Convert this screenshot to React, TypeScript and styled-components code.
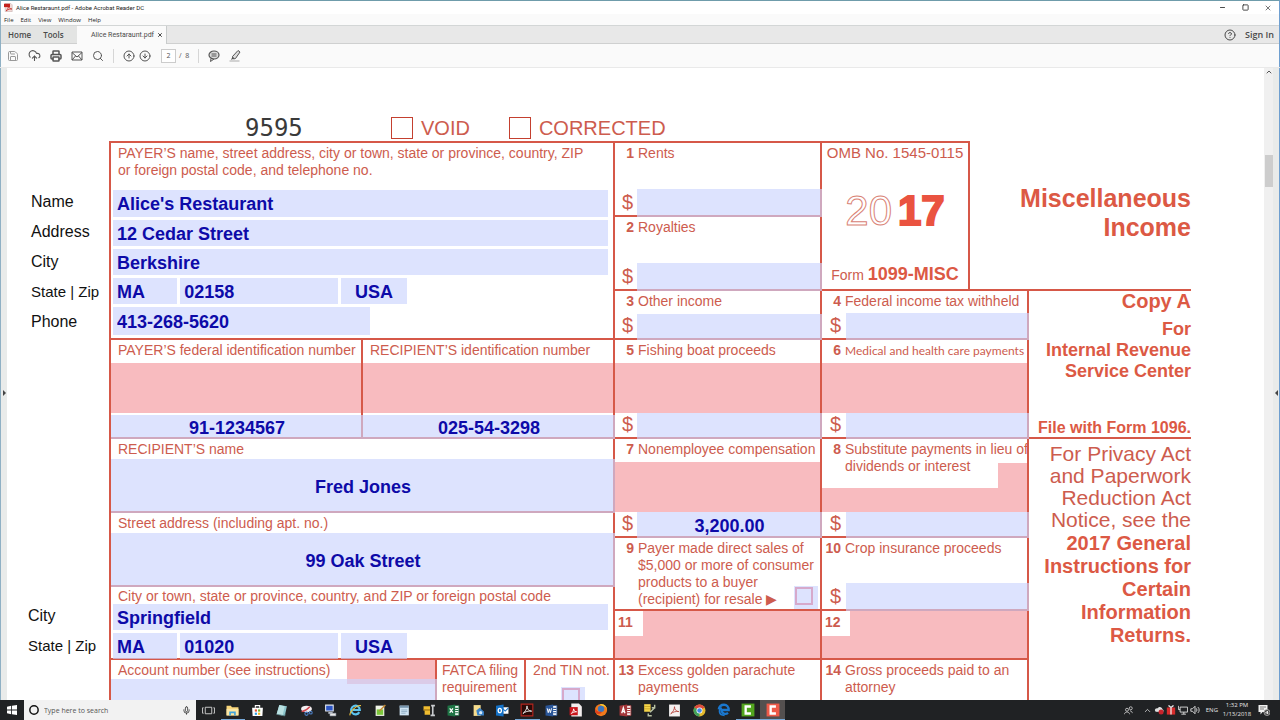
import React from 'react';
import styled, { createGlobalStyle } from 'styled-components';
import {
  Save, CloudUpload, Printer, Search, CircleArrowUp, CircleArrowDown,
  Minus, Square, X, ChevronUp, Mic, CircleHelp,
} from 'lucide-react';

const line = '#d65848';
const ink = '#cd5c4e';
const strong = '#dc5944';
const pink = '#f8bbbf';
const fieldBlue = 'rgba(203, 212, 254, 0.65)';

const GlobalStyle = createGlobalStyle`
  * { box-sizing: border-box; }
  body { margin: 0; font-family: "Liberation Sans", Arial, sans-serif; }
  button, input { font: inherit; margin: 0; padding: 0; border: 0; color: inherit; }
  button { background: none; }
  a { color: inherit; text-decoration: none; }
`;

/* ---------- window chrome ---------- */
const Window = styled.div`
  display: flex;
  flex-direction: column;
  height: 100vh;
  background: #fff;
  color: #222;
`;

const Chrome = styled.header`
  flex: none;
  border-top: 1px solid #6f9cab;
  border-left: 1px solid #8fb0c4;
  border-right: 1px solid #6f9fd0;
  font-family: "Open Sans", "Noto Sans", sans-serif;
`;

const TitleBar = styled.div`
  display: flex;
  align-items: center;
  height: 13px;
  padding: 0 1px 0 3px;
  gap: 3px;
  font-size: 6px;
  line-height: 8px;
`;

const WindowTitle = styled.span`
  flex: 1;
  font-family: Roboto, sans-serif;
`;

const WindowButton = styled.button`
  display: flex;
  justify-content: center;
  width: 20px;
  color: #333;
`;

const MenuBar = styled.nav`
  display: flex;
  align-items: center;
  gap: 7px;
  height: 11px;
  padding-left: 3px;
  background: #fafafa;
  font-size: 6px;
  line-height: 8px;
`;

const TabBar = styled.div`
  display: flex;
  height: 19px;
  background: #e8e8e8;
  border-top: 1px solid #d3d6d6;
  border-bottom: 1px solid #cfd0d0;
  font-size: 8px;
  font-weight: 600;
  color: #4a4a4a;
`;

const HomeTabs = styled.div`
  display: flex;
  align-items: center;
  gap: 12px;
  width: 76px;
  padding-left: 7px;
  background: #e3e4e3;
`;

const ActiveTab = styled.div`
  display: flex;
  align-items: center;
  gap: 3px;
  width: 90px;
  height: 18px;
  padding-left: 14px;
  background: #fafafa;
  border-right: 1px solid #c9cccc;
  font-family: Roboto, sans-serif;
  font-size: 7px;
  font-weight: 400;
`;

const Account = styled.div`
  display: flex;
  align-items: center;
  gap: 9px;
  margin-left: auto;
  padding-right: 5px;
  font-size: 9px;
`;

const IconButton = styled.button`
  display: flex;
  color: inherit;
`;

const Toolbar = styled.div`
  display: flex;
  align-items: center;
  height: 23px;
  padding-left: 6px;
  background: #fafafa;
  color: #555;
`;

const ToolGroup = styled.div<{ $gap: number }>`
  display: flex;
  align-items: center;
  gap: ${(p) => p.$gap}px;
`;

const Divider = styled.span`
  width: 1px;
  height: 14px;
  margin: 0 9px;
  background: #d6d6d6;
`;

const PageNumber = styled.input`
  width: 15px;
  height: 14px;
  margin-left: 10px;
  border: 1px solid #ccc;
  background: #fff;
  font-size: 7px;
  text-align: center;
`;

const PageTotal = styled.span`
  margin-left: 3px;
  font-size: 7px;
`;

/* ---------- document area ---------- */
const Viewer = styled.div`
  display: flex;
  flex: 1;
  min-height: 0;
  border-top: 1px solid #e9e9e9;
`;

const Rail = styled.button<{ $side: 'left' | 'right' }>`
  display: flex;
  flex: none;
  align-items: center;
  justify-content: center;
  width: 7px;
  padding-top: 18px;
  background: #e9ebea;
  border-${(p) => p.$side}: 1px solid ${(p) => (p.$side === 'left' ? '#8fb0c4' : '#6f9fd0')};
`;

const Scrollbar = styled.div`
  display: flex;
  flex: none;
  flex-direction: column;
  align-items: center;
  width: 9px;
  background: #f0f0f0;
  color: #555;
`;

const ScrollThumb = styled.span`
  width: 8px;
  height: 32px;
  margin-top: 79px;
  background: #cdcdcd;
`;

const Page = styled.main`
  flex: 1;
  min-width: 0;
  overflow: hidden;
  padding-right: 73px;
  color: ${ink};
  font-size: 14px;
  line-height: 17px;
`;

const PageHead = styled.div`
  display: flex;
  align-items: center;
  height: 73px;
  padding: 47px 0 0 238px;
  font-size: 20px;
`;

const ScanCode = styled.span`
  width: 146px;
  color: #3a3a3a;
  font-family: "DejaVu Sans Mono", monospace;
  font-size: 24px;
`;

const HeadOption = styled.label`
  display: flex;
  align-items: center;
  gap: 8px;
  margin-right: 39px;
`;

const OpenBox = styled.input.attrs({ type: 'checkbox' })`
  appearance: none;
  width: 22px;
  height: 22px;
  border: 1px solid #c4402f;
`;

const Body = styled.div`
  display: flex;
`;

const SideLabels = styled.div`
  flex: none;
  display: flex;
  flex-direction: column;
  width: 102px;
  padding: 46px 0 0 21px;
  color: #111;
`;

const SideLabel = styled.label<{ $small?: boolean; $outdent?: boolean }>`
  padding-left: ${(p) => (p.$outdent ? 0 : 3)}px;
  font-size: ${(p) => (p.$small ? 15 : 16)}px;
  line-height: 30px;
  white-space: nowrap;
`;

const SideGap = styled.div`
  height: 264px;
`;

const FormSheet = styled.form`
  display: grid;
  grid-template-columns: minmax(0, 504fr) minmax(0, 207fr) minmax(0, 371fr);
  flex: 1;
  min-width: 0;
`;

const Column = styled.div`
  display: flex;
  flex-direction: column;
  min-width: 0;
`;

const Box = styled.section<{ $h: number }>`
  display: flex;
  flex-direction: column;
  min-width: 0;
  height: ${(p) => p.$h}px;
  border-top: 2px solid ${line};
  border-left: 2px solid ${line};
`;

const Caption = styled.label<{ $tight?: boolean }>`
  display: block;
  padding: 2px 0 0 7px;
  line-height: ${(p) => (p.$tight ? 15 : 17)}px;
  white-space: nowrap;
`;

const BoxCaption = styled(Caption)`
  padding-left: 5px;
`;

const Field = styled.input<{ $h: number; $center?: boolean; $flush?: boolean }>`
  position: relative;
  flex: none;
  min-width: 0;
  width: ${(p) => (p.$flush ? 'calc(100% + 2px)' : '100%')};
  height: ${(p) => p.$h}px;
  padding: ${(p) => (p.$center ? '2px 0 0' : '2px 0 0 4px')};
  background: ${fieldBlue};
  color: #0d0aa8;
  font-size: 18px;
  font-weight: 700;
  text-align: ${(p) => (p.$center ? 'center' : 'left')};
  outline: none;
`;

const BottomField = styled(Field)`
  margin-top: auto;
  margin-bottom: -2px;
`;

const FieldStack = styled.div<{ $top: number }>`
  display: flex;
  flex-direction: column;
  gap: 3px;
  padding: ${(p) => p.$top}px 5px 0 2px;
`;

const PlaceRow = styled.div`
  display: grid;
  grid-template-columns: 64fr 158fr 65fr 198fr;
  gap: 3px;
`;

const Half = styled.div`
  width: 52%;
`;

const SplitRow = styled.div<{ $cols: string }>`
  display: grid;
  grid-template-columns: ${(p) => p.$cols};
`;

const Shade = styled.div<{ $h: number; $top?: number }>`
  height: ${(p) => p.$h}px;
  margin-top: ${(p) => p.$top || 0}px;
  background: ${pink};
`;

const NumberedCaption = styled.label`
  display: grid;
  grid-template-columns: 19px minmax(0, 1fr);
  column-gap: 4px;
  padding-top: 2px;
  white-space: nowrap;
`;

const BoxNumber = styled.b`
  text-align: right;
`;

const Narrow = styled.span`
  display: block;
  font-family: Lato, "Arial Narrow", sans-serif;
  font-size: 12px;
`;

const MoneyRow = styled.div`
  display: flex;
  align-items: flex-end;
  margin-top: auto;
  margin-right: -2px;
  margin-bottom: -2px;
`;

const Dollar = styled.span<{ $wide?: boolean }>`
  width: ${(p) => (p.$wide ? 24 : 22)}px;
  flex: none;
  padding: 0 0 5px ${(p) => (p.$wide ? 8 : 7)}px;
  font-size: 20px;
  line-height: 20px;
`;

const MoneyField = styled(Field)`
  flex: 1 1 0;
  width: auto;
`;

const TickArea = styled.span`
  position: relative;
  display: flex;
  width: 24px;
  height: 23px;
  padding: 1px;
  background: ${fieldBlue};
`;

const Tick = styled.input.attrs({ type: 'checkbox' })`
  appearance: none;
  width: 18px;
  height: 18px;
  border: 2px solid #d6a9cb;
`;

const TickRow = styled.div<{ $pad: number; $pull: number }>`
  display: flex;
  justify-content: flex-end;
  padding-right: ${(p) => p.$pad}px;
  margin-top: ${(p) => p.$pull}px;
`;

const ShadedBox = styled(Box)`
  background: ${pink};
`;

const NumberTag = styled.b`
  width: 28px;
  height: 25px;
  padding: 3px 0 0 3px;
  background: #fff;
`;

const SubstituteLabel = styled(NumberedCaption)`
  height: 49px;
  background: linear-gradient(#fff, #fff) left top / calc(100% - 29px) 100% no-repeat,
    linear-gradient(#fff, #fff) right top / 29px 24px no-repeat, ${pink};
`;

const AccountHead = styled.div`
  display: flex;
  justify-content: space-between;
  height: 19px;
`;

const AccountShade = styled.div`
  flex: none;
  width: 88px;
  height: 24px;
  background: ${pink};
`;

const TopRight = styled.div`
  display: grid;
  grid-template-columns: minmax(0, 150fr) minmax(0, 221fr);
  height: 148px;
`;

const YearBox = styled(Box)`
  align-items: center;
  border-right: 2px solid ${line};
`;

const Omb = styled.div`
  padding-top: 1px;
  font-size: 15px;
  white-space: nowrap;
`;

const Year = styled.div`
  margin-top: 27px;
  color: #ea5340;
  font-size: 42px;
  line-height: 46px;
`;

const YearOutline = styled.span`
  color: transparent;
  -webkit-text-stroke: 1px #d98275;
`;

const YearSolid = styled.b`
  margin-left: 6px;
  -webkit-text-stroke: 2px #ea5340;
`;

const FormName = styled.div`
  margin-top: auto;
  padding-bottom: 5px;
  b { font-size: 18px; color: ${strong}; }
`;

const FormTitle = styled.h1`
  margin: 0;
  padding-top: 43px;
  color: ${strong};
  font-size: 25px;
  line-height: 29px;
  text-align: right;
`;

const LowerRight = styled.div`
  display: grid;
  grid-template-columns: minmax(0, 207fr) minmax(0, 164fr);
`;

const CopyBox = styled(Box)`
  color: ${strong};
  font-size: 18px;
  font-weight: 700;
  line-height: 21px;
  text-align: right;
`;

const CopyTitle = styled.h2`
  margin: 0;
  font-size: 20px;
  line-height: 21px;
  padding-bottom: 7px;
`;

const FileWith = styled.span`
  margin-top: auto;
  font-size: 16px;
  line-height: 18px;
  white-space: nowrap;
`;

const Notice = styled(Box)`
  padding-top: 4px;
  font-size: 21px;
  line-height: 22px;
  text-align: right;
  b { color: ${strong}; font-size: 20px; line-height: 23px; padding-top: 1px; }
`;

/* ---------- task bar ---------- */
const Taskbar = styled.footer`
  display: flex;
  flex: none;
  align-items: center;
  height: 20px;
  background: #202224;
  color: #e6e6e6;
  font-family: "Open Sans", "Noto Sans", sans-serif;
`;

const StartButton = styled.button`
  display: flex;
  justify-content: center;
  width: 24px;
`;

const SearchBox = styled.label`
  display: flex;
  align-items: center;
  gap: 5px;
  width: 172px;
  height: 20px;
  padding: 0 5px;
  background: #f2f2f2;
  color: #222;
`;

const SearchInput = styled.input`
  flex: 1;
  min-width: 0;
  background: none;
  font-size: 7px;
  outline: none;
  &::placeholder { color: #555; opacity: 1; }
`;

const AppStrip = styled.div`
  display: grid;
  grid-template-columns: repeat(24, 1fr);
  flex: 0 1 589px;
  height: 20px;
`;

const AppButton = styled.button<{ $open?: boolean; $active?: boolean }>`
  display: flex;
  align-items: center;
  justify-content: center;
  height: 20px;
  padding-top: 1px;
  background: ${(p) => (p.$active ? '#54504f' : 'transparent')};
  border-bottom: 1px solid ${(p) => (p.$open ? '#76a9d8' : 'transparent')};
`;

const Tray = styled.div`
  display: flex;
  align-items: center;
  gap: 2px;
  margin-left: auto;
  padding-right: 10px;
  font-size: 6px;
`;

const Person = styled.span`
  display: flex;
  margin-right: 8px;
`;

const Clock = styled.time`
  margin: 0 4px 0 2px;
  width: 30px;
  line-height: 9px;
  text-align: center;
`;

const Lang = styled.span`
  margin-left: 4px;
`;

/* ---------- icon drawings ---------- */
const Glyph = ({ children, size = 13 }: { children: React.ReactNode; size?: number }) => (
  <svg width={size} height={size} viewBox="0 0 24 24" fill="none" aria-hidden="true">{children}</svg>
);

const PdfBadge = () => (
  <Glyph size={9}>
    <path d="M3 1h15l4 4v18H3z" fill="#f3d9d6" stroke="#a99" />
    <path d="M0 2h16v9H0z" fill="#c4211b" />
    <path d="M6 21c3-4 6-9 6-13 0 4 4 8 9 8-5-1-10 1-15 5z" stroke="#c4211b" strokeWidth="2" />
  </Glyph>
);

const acrobatSwirl = 'M5 18c4-3 7-8 7-13 0 5 3 9 8 9-6-1-11 1-15 4z';

const Letter = ({ c, fg = '#fff', children }: { c: string; fg?: string; children: React.ReactNode }) => (
  <Glyph>
    <path d="M12 3h10v18H12z" fill="#fff" stroke={c} strokeWidth="1.5" />
    <path d="M15 8h6M15 12h6M15 16h6" stroke={c} strokeWidth="2" />
    <path d="M1 3l14-2v22L1 21z" fill={c} />
    <g stroke={fg} strokeWidth="2.4">{children}</g>
  </Glyph>
);

const apps: { name: string; open?: boolean; active?: boolean; icon: React.ReactNode }[] = [
  { name: 'Task View', icon: <Glyph><path d="M6 6h12v12H6zM3 7H1v10h2M21 7h2v10h-2" stroke="#ddd" strokeWidth="1.6" /></Glyph> },
  { name: 'File Explorer', open: true, icon: <Glyph><path d="M1 3h8l2 3h12v15H1z" fill="#f7d57a" /><path d="M1 9h22v12H1z" fill="#fbe7a6" /><path d="M6 21v-7h12v7h-3v-4H9v4z" fill="#3fa3dc" /></Glyph> },
  { name: 'Store', icon: <Glyph><path d="M2 7h20l-1 15H3z" fill="#fff" /><path d="M8 7V3h8v4" stroke="#fff" strokeWidth="2" /><path d="M7 10h4v4H7z" fill="#e5502f" /><path d="M13 10h4v4h-4z" fill="#6eb42c" /><path d="M7 16h4v4H7z" fill="#2e9fdf" /><path d="M13 16h4v4h-4z" fill="#f4b61c" /></Glyph> },
  { name: 'Notes', icon: <Glyph><path d="M8 2l14 2-4 18L3 19z" fill="#8cc5cc" /><path d="M8 2l10 2-4 17L3 19z" fill="#b9e1e2" /><path d="M3 19l15 3 1-4" stroke="#54777d" strokeWidth="1.5" /></Glyph> },
  { name: 'Snipping Tool', icon: <Glyph><ellipse cx="12" cy="9" rx="10" ry="6" fill="#f2eef0" /><path d="M3 14c5-1 10-3 15-9" stroke="#d0454d" strokeWidth="2.5" /><circle cx="12" cy="18" r="3" stroke="#4c7fc5" strokeWidth="2" /><circle cx="20" cy="16" r="2.5" stroke="#4c7fc5" strokeWidth="2" /></Glyph> },
  { name: 'Remote Desktop', icon: <Glyph><path d="M3 2h14v11H3z" fill="#2c55c4" stroke="#dfe5ee" strokeWidth="2" /><path d="M8 15h8v3H8z" fill="#cfd6e0" /><path d="M11 17h11v5H11z" fill="#e9e9e9" stroke="#8c95a5" /></Glyph> },
  { name: 'Internet Explorer', icon: <Glyph><path d="M19 15a8 8 0 1 1 1-4H7" stroke="#5cc4ee" strokeWidth="4" /><path d="M2 21C0 15 15 1 22 3" stroke="#f2c53c" strokeWidth="2" /></Glyph> },
  { name: 'Notepad++', icon: <Glyph><path d="M3 3h16v19H3z" fill="#f1f5e9" /><path d="M5 10h12v10H5z" fill="#7cc63c" /><path d="M10 13L21 2" stroke="#c78930" strokeWidth="2.5" /></Glyph> },
  { name: 'Notepad', icon: <Glyph><path d="M3 3h17v18H3z" fill="#cfe4f3" /><path d="M3 3h17v4H3z" fill="#7695ad" /><path d="M6 11h11M6 14h11M6 17h8" stroke="#87a8c0" strokeWidth="1.5" /></Glyph> },
  { name: 'WinZip', icon: <Glyph><path d="M1 4h12v8H1zM3 12h10v8H3z" fill="#f0bd30" /><path d="M1 11h12" stroke="#9b6e12" strokeWidth="2" /><path d="M18 2v20M15 3h7M14 21h8" stroke="#c9ccd0" strokeWidth="3" /></Glyph> },
  { name: 'Excel', icon: <Letter c="#1f7445"><path d="M5 8l6 8M11 8l-6 8" /></Letter> },
  { name: 'Folder Sync', icon: <Glyph><path d="M3 2h13v20H3z" fill="#f5dc8e" /><path d="M8 12l6-5 8 7v7H10z" fill="#3a83c9" /><circle cx="16" cy="16" r="3" fill="#d4e8f8" /></Glyph> },
  { name: 'Outlook', icon: <Glyph><path d="M11 6h12v12H11z" fill="#fff" /><path d="M11 7l6 6 6-6" stroke="#1471c6" strokeWidth="2" /><path d="M0 3l14-2v22L0 21z" fill="#1471c6" /><ellipse cx="7" cy="12" rx="3" ry="4" stroke="#fff" strokeWidth="2.4" /></Glyph> },
  { name: 'Acrobat Reader', open: true, icon: <Glyph size={14}><path d="M2 2h20v20H2z" fill="#2a0a08" stroke="#b3241c" strokeWidth="2" /><path d={acrobatSwirl} stroke="#eee" strokeWidth="1.6" /></Glyph> },
  { name: 'Word', icon: <Letter c="#2a5699"><path d="M4 8l2 8 2-7 2 7 2-8" strokeWidth="1.8" /></Letter> },
  { name: 'Acrobat', icon: <Glyph size={14}><path d="M4 1h13l5 5v17H4z" fill="#f3eded" /><path d="M1 7h14v14H1z" fill="#c9151b" /><path d="M4 18c2-2 4-5 4-8 0 3 2 5 5 5-4 0-6 1-9 3z" stroke="#fff" strokeWidth="1.6" /></Glyph> },
  { name: 'Firefox', icon: <Glyph size={14}><circle cx="12" cy="12" r="10.5" fill="#f07a1c" /><path d="M10 2c7-2 13 4 12 11 0-4-2-6-4-7-3-1-6-2-8-4z" fill="#f8c931" /><circle cx="12" cy="10" r="5.5" fill="#3b76bd" /><path d="M2 8c1 5 5 8 11 7 1 4-9 6-11 0z" fill="#df3f1d" /></Glyph> },
  { name: 'Access', icon: <Letter c="#a4373a"><path d="M5 17l3-10 3 10M6 14h5" /></Letter> },
  { name: 'Database Tool', icon: <Glyph size={14}><path d="M2 2h11v13H2z" fill="#f4d44a" /><path d="M2 6h11M2 10h11" stroke="#b18d16" /><path d="M12 16l8-8M20 3v5h-5M9 18v4h6" stroke="#b9c2a4" strokeWidth="2.5" /></Glyph> },
  { name: 'PDF Document', icon: <Glyph><path d="M2 1h20v22H2z" fill="#f4f1f1" /><path d={acrobatSwirl} stroke="#b5453e" strokeWidth="1.6" /></Glyph> },
  { name: 'Chrome', icon: <Glyph><circle cx="12" cy="12" r="11" fill="#e3b92e" /><path d="M12 12L2.500 6.500A11 11 0 0 1 21.500 6.500z" fill="#dd4b3e" /><path d="M12 12L2.500 6.500A11 11 0 0 0 12 23z" fill="#40a15b" /><circle cx="12" cy="12" r="5.500" fill="#fff" /><circle cx="12" cy="12" r="4.200" fill="#4587e6" /></Glyph> },
  { name: 'Edge', icon: <Glyph size={14}><path d="M3 11C4 5 8 3 12 3c5 0 8 4 8 9H8c0 7 7 8 11 5" stroke="#1a78cf" strokeWidth="4" /><path d="M8 8c-5 3-6 13 5 13" stroke="#1a78cf" strokeWidth="3" /></Glyph> },
  { name: 'Camtasia', open: true, icon: <Glyph size={14}><path d="M1 1h22v22H1z" fill="#52a51f" /><path d="M17 6H8v12h9" stroke="#fff" strokeWidth="4" /></Glyph> },
  { name: 'Recorder', open: true, active: true, icon: <Glyph size={14}><path d="M1 1h22v22H1z" fill="#ee5a48" /><path d="M17 6H8v12h9" stroke="#fff" strokeWidth="4" /></Glyph> },
];

/* ---------- form pieces ---------- */
interface MoneyProps { id: string; h?: number; value?: string; wide?: boolean }
const Money = ({ id, h = 28, value, wide }: MoneyProps) => (
  <MoneyRow>
    <Dollar $wide={wide}>$</Dollar>
    <MoneyField id={id} $h={h} $center defaultValue={value} />
  </MoneyRow>
);

interface NumberedProps { n: number; htmlFor?: string; children: React.ReactNode }
const Numbered = ({ n, htmlFor, children }: NumberedProps) => (
  <NumberedCaption htmlFor={htmlFor}>
    <BoxNumber>{n}</BoxNumber>
    <span>{children}</span>
  </NumberedCaption>
);

const Place = ({ prefix, zip }: { prefix: string; zip: string }) => (
  <PlaceRow>
    <Field $h={26} id={`${prefix}-state`} defaultValue="MA" />
    <Field $h={26} aria-label="Zip" defaultValue={zip} />
    <Field $h={26} $center aria-label="Country" defaultValue="USA" />
  </PlaceRow>
);

export default function App() {
  return (
    <Window>
      <GlobalStyle />
      <Chrome>
        <TitleBar>
          <PdfBadge />
          <WindowTitle>Alice Restaraunt.pdf - Adobe Acrobat Reader DC</WindowTitle>
          <WindowButton aria-label="Minimize"><Minus size={7} strokeWidth={3} /></WindowButton>
          <WindowButton aria-label="Maximize"><Square size={7} strokeWidth={3} /></WindowButton>
          <WindowButton aria-label="Close"><X size={8} /></WindowButton>
        </TitleBar>
        <MenuBar>
          {['File', 'Edit', 'View', 'Window', 'Help'].map((m) => <button key={m}>{m}</button>)}
        </MenuBar>
        <TabBar>
          <HomeTabs><button>Home</button><button>Tools</button></HomeTabs>
          <ActiveTab>
            <span>Alice Restaraunt.pdf</span>
            <IconButton aria-label="Close tab"><X size={6} strokeWidth={4} /></IconButton>
          </ActiveTab>
          <Account>
            <IconButton aria-label="Help"><CircleHelp size={12} strokeWidth={2} /></IconButton>
            <a href="#sign-in">Sign In</a>
          </Account>
        </TabBar>
        <Toolbar>
          <ToolGroup $gap={9}>
            <IconButton aria-label="Save"><Save size={12} color="#999" /></IconButton>
            <IconButton aria-label="Upload"><CloudUpload size={13} /></IconButton>
            <IconButton aria-label="Print"><Printer size={12} strokeWidth={3} /></IconButton>
            <IconButton aria-label="Mail">
              <Glyph size={12}><path d="M2 4h20v16H2zM2 5l10 9L22 5M2 20l7-8M22 20l-7-8" stroke="#555" strokeWidth="2" /></Glyph>
            </IconButton>
            <IconButton aria-label="Find"><Search size={12} strokeWidth={2} /></IconButton>
          </ToolGroup>
          <Divider />
          <ToolGroup $gap={4}>
            <IconButton aria-label="Previous page"><CircleArrowUp size={12} /></IconButton>
            <IconButton aria-label="Next page"><CircleArrowDown size={12} /></IconButton>
          </ToolGroup>
          <PageNumber aria-label="Page number" defaultValue="2" />
          <PageTotal>/&nbsp; 8</PageTotal>
          <Divider />
          <ToolGroup $gap={9}>
            <IconButton aria-label="Comment">
              <Glyph size={12}>
                <ellipse cx="12" cy="10" rx="10" ry="8" stroke="#555" strokeWidth="2.4" fill="#ddd" />
                <path d="M6 17l-1 6 7-5M7 8h10M7 12h10" stroke="#555" strokeWidth="2" />
              </Glyph>
            </IconButton>
            <IconButton aria-label="Highlight">
              <Glyph size={12}>
                <path d="M7 13L18 1l4 3-9 13-4 1z" stroke="#555" strokeWidth="2" fill="#ddd" />
                <path d="M7 13l-3 7 6-3z" fill="#555" />
                <path d="M1 22h20" stroke="#bbb" strokeWidth="2.5" />
              </Glyph>
            </IconButton>
          </ToolGroup>
        </Toolbar>
      </Chrome>

      <Viewer>
        <Rail $side="left" aria-label="Show navigation pane">
          <svg width="3" height="6" viewBox="0 0 3 6"><path d="M0 0l3 3-3 3z" fill="#444" /></svg>
        </Rail>
        <Page>
          <PageHead>
            <ScanCode>9595</ScanCode>
            <HeadOption><OpenBox />VOID</HeadOption>
            <HeadOption><OpenBox />CORRECTED</HeadOption>
          </PageHead>
          <Body>
            <SideLabels>
              <SideLabel htmlFor="payer-name">Name</SideLabel>
              <SideLabel htmlFor="payer-street">Address</SideLabel>
              <SideLabel htmlFor="payer-city">City</SideLabel>
              <SideLabel htmlFor="payer-state" $small>State | Zip</SideLabel>
              <SideLabel htmlFor="payer-phone">Phone</SideLabel>
              <SideGap />
              <SideLabel htmlFor="recipient-city" $outdent>City</SideLabel>
              <SideLabel htmlFor="recipient-state" $small $outdent>State | Zip</SideLabel>
            </SideLabels>
            <FormSheet>
              <Column>
                <Box $h={197}>
                  <Caption htmlFor="payer-name">
                    PAYER’S name, street address, city or town, state or province, country, ZIP
                    <br />or foreign postal code, and telephone no.
                  </Caption>
                  <FieldStack $top={11}>
                    <Field $h={27} id="payer-name" defaultValue="Alice's Restaurant" />
                    <Field $h={26} id="payer-street" defaultValue="12 Cedar Street" />
                    <Field $h={26} id="payer-city" defaultValue="Berkshire" />
                    <Place prefix="payer" zip="02158" />
                    <Half><Field $h={28} id="payer-phone" defaultValue="413-268-5620" /></Half>
                  </FieldStack>
                </Box>
                <SplitRow $cols="minmax(0, 1fr) minmax(0, 1fr)">
                  <Box $h={99}>
                    <Caption htmlFor="payer-id">PAYER’S federal identification number</Caption>
                    <Shade $h={50} $top={4} />
                    <BottomField $h={24} $center $flush id="payer-id" defaultValue="91-1234567" />
                  </Box>
                  <Box $h={99}>
                    <Caption htmlFor="recipient-id">RECIPIENT’S identification number</Caption>
                    <Shade $h={50} $top={4} />
                    <BottomField $h={24} $center $flush id="recipient-id" defaultValue="025-54-3298" />
                  </Box>
                </SplitRow>
                <Box $h={74}>
                  <Caption htmlFor="recipient-name">RECIPIENT’S name</Caption>
                  <BottomField $h={54} $center $flush id="recipient-name" defaultValue="Fred Jones" />
                </Box>
                <Box $h={74}>
                  <Caption htmlFor="recipient-street">Street address (including apt. no.)</Caption>
                  <BottomField $h={54} $center $flush id="recipient-street" defaultValue="99 Oak Street" />
                </Box>
                <Box $h={73}>
                  <Caption $tight htmlFor="recipient-city">City or town, state or province, country, and ZIP or foreign postal code</Caption>
                  <FieldStack $top={0}>
                    <Field $h={26} id="recipient-city" defaultValue="Springfield" />
                    <Place prefix="recipient" zip="01020" />
                  </FieldStack>
                </Box>
                <SplitRow $cols="minmax(0, 326fr) minmax(0, 89fr) minmax(0, 89fr)">
                  <Box $h={99}>
                    <AccountHead>
                      <Caption htmlFor="account">Account number (see instructions)</Caption>
                      <AccountShade />
                    </AccountHead>
                    <Field $h={28} $flush id="account" />
                  </Box>
                  <Box $h={99}><BoxCaption>FATCA filing<br />requirement</BoxCaption></Box>
                  <Box $h={99}>
                    <Caption htmlFor="tin">2nd TIN not.</Caption>
                    <TickRow $pad={28} $pull={8}><TickArea><Tick id="tin" /></TickArea></TickRow>
                  </Box>
                </SplitRow>
              </Column>

              <Column>
                <Box $h={74}><Numbered n={1} htmlFor="b1">Rents</Numbered><Money id="b1" /></Box>
                <Box $h={74}><Numbered n={2} htmlFor="b2">Royalties</Numbered><Money id="b2" /></Box>
                <Box $h={49}><Numbered n={3} htmlFor="b3">Other income</Numbered><Money id="b3" h={26} /></Box>
                <Box $h={99}>
                  <Numbered n={5} htmlFor="b5">Fishing boat proceeds</Numbered>
                  <Shade $h={50} $top={4} />
                  <Money id="b5" h={26} />
                </Box>
                <Box $h={99}>
                  <Numbered n={7} htmlFor="b7">Nonemployee compensation</Numbered>
                  <Shade $h={50} $top={4} />
                  <Money id="b7" h={26} value="3,200.00" />
                </Box>
                <Box $h={73}>
                  <Numbered n={9} htmlFor="b9">
                    Payer made direct sales of<br />$5,000 or more of consumer<br />products to a buyer<br />(recipient) for resale ▶
                  </Numbered>
                  <TickRow $pad={2} $pull={-22}><TickArea><Tick id="b9" /></TickArea></TickRow>
                </Box>
                <ShadedBox $h={49}><NumberTag>11</NumberTag></ShadedBox>
                <Box $h={99}>
                  <Numbered n={13}>Excess golden parachute<br />payments</Numbered>
                </Box>
              </Column>

              <Column>
                <TopRight>
                  <YearBox $h={148}>
                    <Omb>OMB No. 1545-0115</Omb>
                    <Year><YearOutline>20</YearOutline><YearSolid>17</YearSolid></Year>
                    <FormName>Form <b>1099-MISC</b></FormName>
                  </YearBox>
                  <FormTitle>Miscellaneous<br />Income</FormTitle>
                </TopRight>
                <LowerRight>
                  <Column>
                    <Box $h={49}><Numbered n={4} htmlFor="b4">Federal income tax withheld</Numbered><Money wide id="b4" h={27} /></Box>
                    <Box $h={99}>
                      <Numbered n={6} htmlFor="b6"><Narrow>Medical and health care payments</Narrow></Numbered>
                      <Shade $h={50} $top={4} />
                      <Money wide id="b6" h={26} />
                    </Box>
                    <Box $h={99}>
                      <SubstituteLabel htmlFor="b8">
                        <BoxNumber>8</BoxNumber>
                        <span>Substitute payments in lieu of<br />dividends or interest</span>
                      </SubstituteLabel>
                      <Shade $h={24} />
                      <Money wide id="b8" h={26} />
                    </Box>
                    <Box $h={73}><Numbered n={10} htmlFor="b10">Crop insurance proceeds</Numbered><Money wide id="b10" /></Box>
                    <ShadedBox $h={49}><NumberTag>12</NumberTag></ShadedBox>
                    <Box $h={99}>
                      <Numbered n={14}>Gross proceeds paid to an<br />attorney</Numbered>
                    </Box>
                  </Column>
                  <Column>
                    <CopyBox $h={148}>
                      <CopyTitle>Copy A</CopyTitle>
                      For<br />Internal Revenue<br />Service Center
                      <FileWith>File with Form 1096.</FileWith>
                    </CopyBox>
                    <Notice $h={320}>
                      For Privacy Act<br />and Paperwork<br />Reduction Act<br />Notice, see the
                      <b>2017 General<br />Instructions for<br />Certain<br />Information<br />Returns.</b>
                    </Notice>
                  </Column>
                </LowerRight>
              </Column>
            </FormSheet>
          </Body>
        </Page>
        <Scrollbar>
          <ChevronUp size={8} strokeWidth={3} />
          <ScrollThumb />
        </Scrollbar>
        <Rail $side="right" aria-label="Show tools pane">
          <svg width="3" height="6" viewBox="0 0 3 6"><path d="M3 0L0 3l3 3z" fill="#444" /></svg>
        </Rail>
      </Viewer>

      <Taskbar>
        <StartButton aria-label="Start">
          <Glyph size={10}><path d="M0 4l10-2v9H0zM12 2l12-2v11H12zM0 13h10v9L0 20zM12 13h12v11l-12-2z" fill="#fff" /></Glyph>
        </StartButton>
        <SearchBox>
          <Glyph size={10}><circle cx="12" cy="12" r="10" stroke="#111" strokeWidth="3.500" /></Glyph>
          <SearchInput placeholder="Type here to search" aria-label="Search" />
          <Mic size={9} />
        </SearchBox>
        <AppStrip>
          {apps.map((a) => (
            <AppButton key={a.name} aria-label={a.name} $open={a.open} $active={a.active}>{a.icon}</AppButton>
          ))}
        </AppStrip>
        <Tray>
          <Person><Glyph size={9}><circle cx="8" cy="10" r="4" stroke="#ddd" strokeWidth="2" /><circle cx="18" cy="6" r="4" stroke="#ddd" strokeWidth="2" /><path d="M1 22c1-8 13-8 14 0M16 13c4 0 6 3 6 6" stroke="#ddd" strokeWidth="2" /></Glyph></Person>
          <ChevronUp size={9} />
          <Glyph size={10}><path d="M4 16c-5-5 1-10 5-8 3-6 11-3 11 2 4 1 4 7 0 7z" fill="#ddd" /><circle cx="17" cy="17" r="6" fill="#c8232c" /></Glyph>
          <Glyph size={10}><path d="M2 6h20v17H2z" fill="#d62b2b" /><path d="M12 6v17M6 1l6 5 6-5" stroke="#eee" strokeWidth="3" /></Glyph>
          <Glyph size={10}><path d="M5 5h18v12H5zM14 17v5M8 22h11M1 2v9h4" stroke="#eee" strokeWidth="2" /></Glyph>
          <Glyph size={10}><path d="M2 9h4l6-6v18l-6-6H2zM15 8c2 2 2 6 0 8M19 5c4 4 4 10 0 14" stroke="#eee" strokeWidth="2" /></Glyph>
          <Lang>ENG</Lang>
          <Clock>1:32 PM<br />1/13/2018</Clock>
          <Glyph size={12}><path d="M1 2h18v14H9l-4 5v-5H1z" fill="#f0f0f0" /><path d="M4 6h12M4 10h8" stroke="#555" strokeWidth="1.500" /><circle cx="18" cy="17" r="6" fill="#444" stroke="#bbb" strokeWidth="1.500" /><path d="M19 20v-6l-4 4h6" stroke="#fff" strokeWidth="1.500" /></Glyph>
        </Tray>
      </Taskbar>
    </Window>
  );
}
